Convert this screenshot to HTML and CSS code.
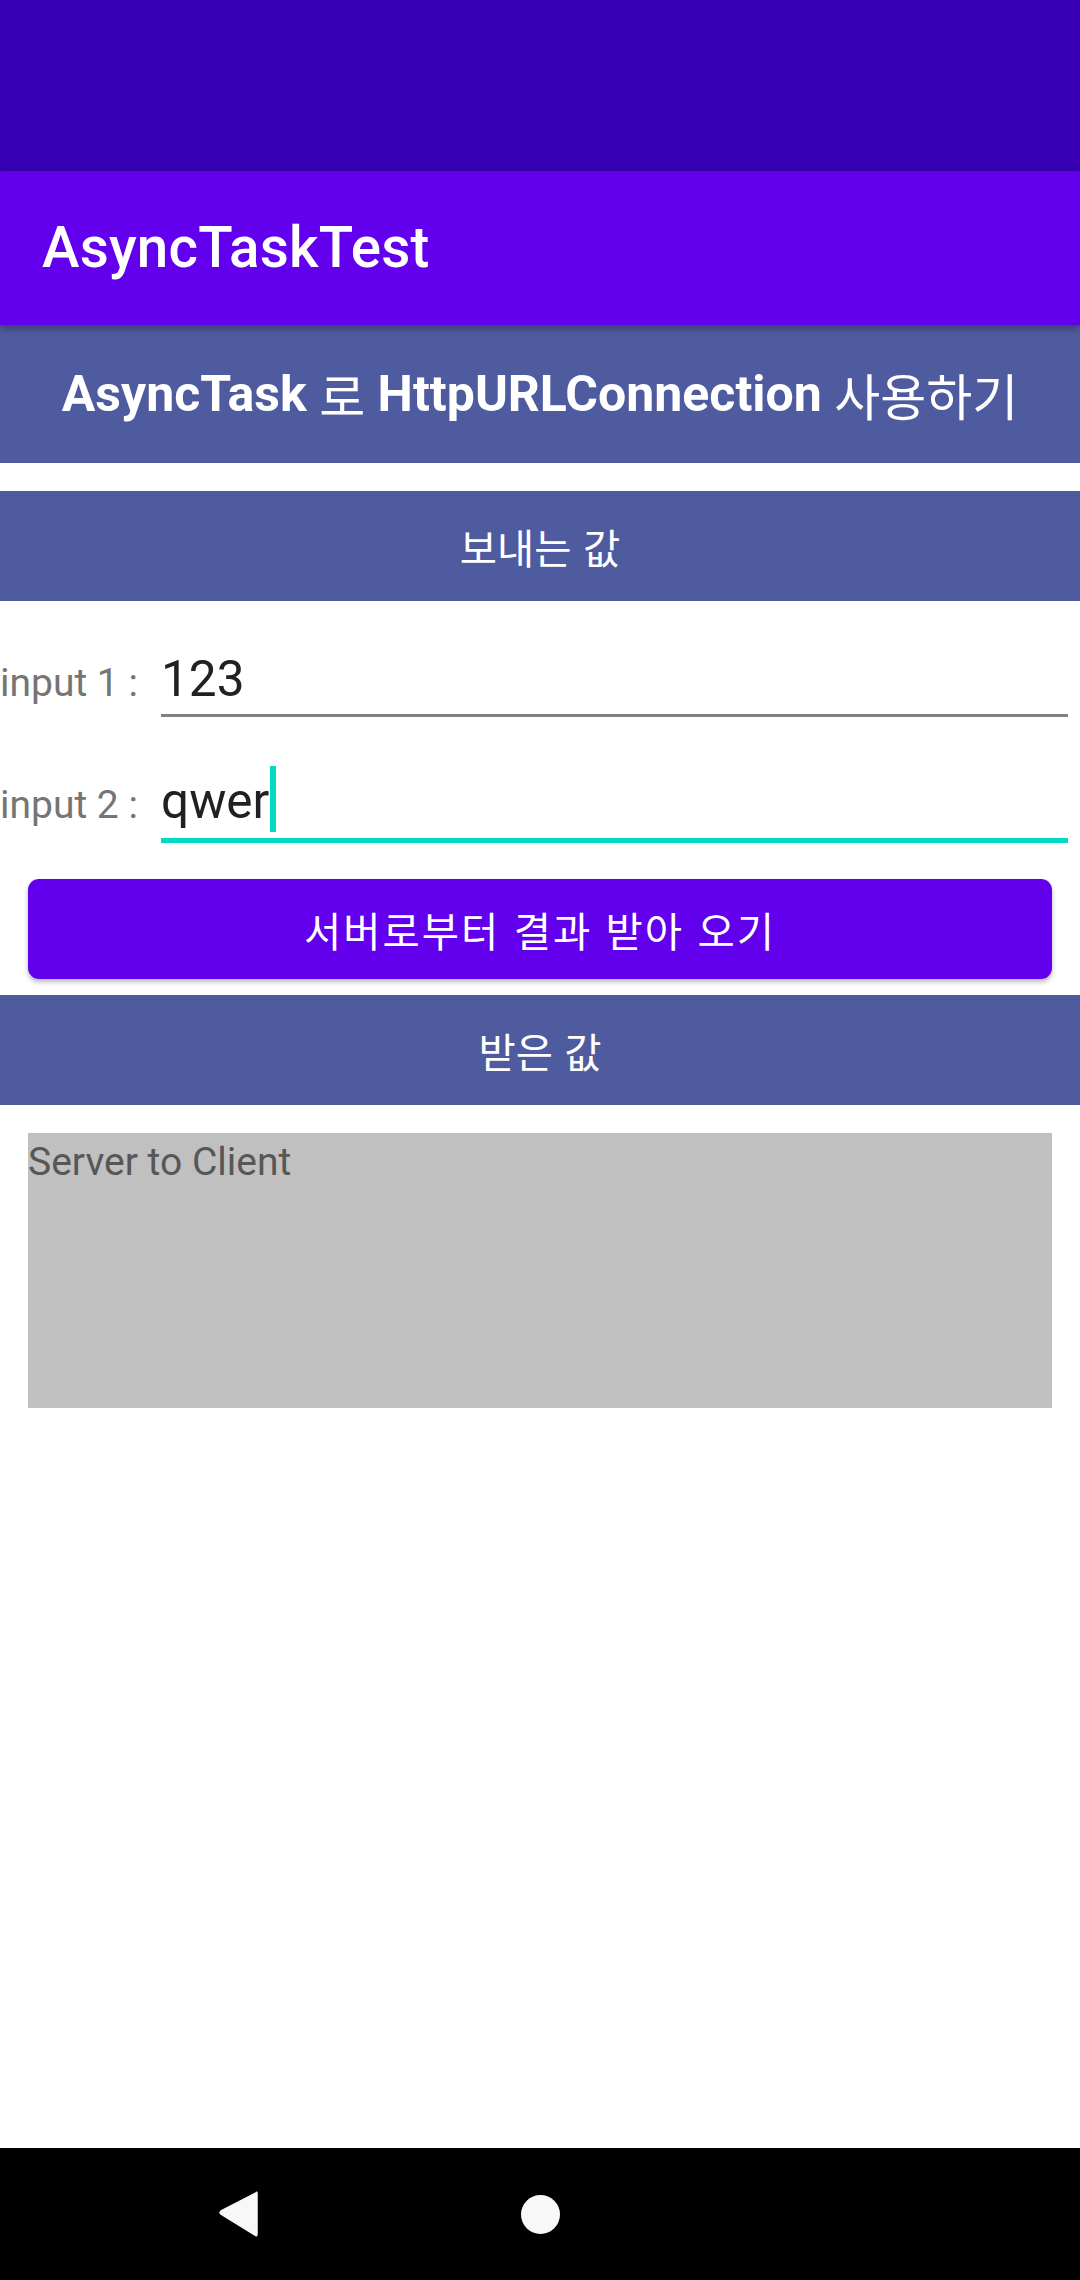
FILE: index.html
```html
<!DOCTYPE html>
<html lang="ko">
<head>
<meta charset="utf-8">
<title>AsyncTaskTest</title>
<link rel="stylesheet" href="styles.css">
</head>
<body>
<div class="screen">
  <div class="status"></div>
  <header class="appbar"><span class="title">AsyncTaskTest</span></header>
  <div class="heading">AsyncTask <span class="ko">로</span> HttpURLConnection <span class="ko">사용하기</span></div>
  <div class="section section-send">보내는 값</div>
  <div class="form">
    <div class="row row-1">
      <span class="label">input 1 :</span>
      <div class="field"><span class="value">123</span></div>
    </div>
    <div class="row row-2">
      <span class="label">input 2 :</span>
      <div class="field focused"><span class="value">qwer<span class="cursor"></span></span></div>
    </div>
  </div>
  <button class="btn">서버로부터 결과 받아 오기</button>
  <div class="section section-recv">받은 값</div>
  <div class="result">Server to Client</div>
  <div class="spacer"></div>
  <nav class="navbar">
    <svg class="nav-back" width="40" height="48" viewBox="0 0 40 48">
      <path d="M37 3 Q38 1 38 4 L38 44 Q38 47 36 45 L2 24 Q0 23 2 21 Z" fill="#f8f8f8" stroke="#f8f8f8" stroke-width="1.5" stroke-linejoin="round"/>
    </svg>
    <span class="nav-home"></span>
  </nav>
</div>
</body>
</html>
```
FILE: styles.css
```css
* { box-sizing: border-box; }
html, body { margin: 0; padding: 0; background: #ffffff; }
body { font-family: Roboto, "Noto Sans CJK KR", sans-serif; }

.screen {
  width: 1080px;
  height: 2280px;
  display: flex;
  flex-direction: column;
  overflow: hidden;
}

.status { height: 171px; background: #3700B3; flex: none; }

.appbar {
  height: 154px;
  flex: none;
  background: #6200EE;
  display: flex;
  align-items: center;
  padding-left: 42px;
  position: relative;
  z-index: 1;
  box-shadow: 0 3px 8px rgba(0, 0, 0, 0.35);
}
.title {
  color: #ffffff;
  font-family: Roboto, sans-serif;
  font-weight: 500;
  font-size: 56.5px;
  letter-spacing: 0.2px;
}

.heading {
  height: 138px;
  flex: none;
  background: #4F5B9F;
  color: #ffffff;
  font-weight: 700;
  font-size: 50px;
  display: flex;
  align-items: center;
  justify-content: center;
  white-space: pre;
}
.heading .ko { font-family: "Noto Sans CJK KR", sans-serif; font-weight: 400; }

.section {
  height: 110px;
  flex: none;
  background: #4F5B9F;
  color: #ffffff;
  font-family: "Noto Sans CJK KR", sans-serif;
  font-size: 40.5px;
  display: flex;
  align-items: center;
  justify-content: center;
}
.section-send { margin-top: 28px; }
.section-recv { margin-top: 16px; }

.form { flex: none; display: flex; flex-direction: column; }
.row {
  display: flex;
  align-items: baseline;
}
.row-1 { margin-top: 48px; }
.row-2 { margin-top: 54px; }

.label {
  width: 161px;
  flex: none;
  color: #757575;
  font-size: 39px;
  line-height: 46px;
}
.field {
  flex: 1;
  margin-right: 12px;
  border-bottom: 3px solid #808080;
  padding-bottom: 5px;
  font-size: 49.5px;
  line-height: 60px;
}
.field.focused {
  border-bottom: 5px solid #03DAC5;
  padding-bottom: 7px;
}
.value {
  color: #212121;
  position: relative;
}
.cursor {
  position: absolute;
  left: 100%;
  bottom: -2px;
  width: 6px;
  height: 66px;
  margin-left: 1px;
  background: #03DAC5;
}

.btn {
  flex: none;
  margin: 36px 28px 0 28px;
  height: 100px;
  border: none;
  border-radius: 11px;
  background: #6200EE;
  color: #ffffff;
  font-family: "Noto Sans CJK KR", sans-serif;
  font-size: 40.5px;
  letter-spacing: 2px;
  box-shadow: 0 3px 5px rgba(0, 0, 0, 0.28);
  padding: 0;
}

.result {
  flex: none;
  margin: 28px 28px 0 28px;
  height: 275px;
  background: #C0C0C0;
  color: #575757;
  font-size: 39px;
  line-height: 46px;
  padding-top: 6px;
}

.spacer { flex: 1; }

.navbar {
  height: 132px;
  flex: none;
  background: #000000;
  display: flex;
  align-items: center;
  padding-left: 219px;
}
.nav-back { display: block; }
.nav-home {
  width: 39px;
  height: 39px;
  border-radius: 50%;
  background: #f8f8f8;
  margin-left: 262px;
}
```
